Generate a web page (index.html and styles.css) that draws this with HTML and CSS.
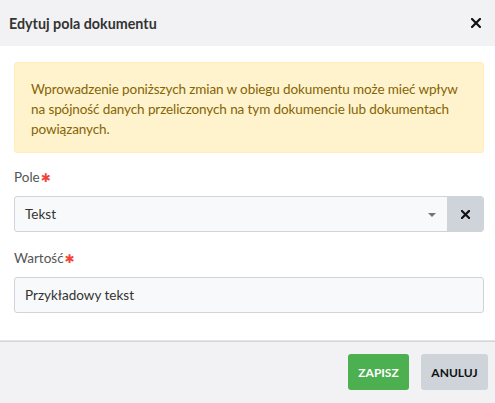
FILE: index.html
```html
<!DOCTYPE html>
<html lang="pl">
<head>
<meta charset="utf-8">
<title>Edytuj pola dokumentu</title>
<link rel="stylesheet" href="styles.css">
</head>
<body>
<div class="modal">
  <div class="modal-header">
    <h1 class="modal-title">Edytuj pola dokumentu</h1>
    <button class="close" type="button" aria-label="Zamknij">
      <svg width="10" height="10" viewBox="0 0 10 10"><path d="M1 1L9 9M9 1L1 9" stroke="#111" stroke-width="2.2" stroke-linecap="square"/></svg>
    </button>
  </div>
  <div class="modal-body">
    <div class="alert">Wprowadzenie poniższych zmian w obiegu dokumentu może mieć wpływ na spójność danych przeliczonych na tym dokumencie lub dokumentach powiązanych.</div>
    <div class="field">
      <label class="label">Pole<span class="req">✱</span></label>
      <div class="select">
        <div class="select-value">Tekst</div>
        <span class="caret"></span>
        <button class="select-clear" type="button" aria-label="Wyczyść">
          <svg width="9" height="9" viewBox="0 0 10 10"><path d="M1 1L9 9M9 1L1 9" stroke="#111" stroke-width="2.4" stroke-linecap="square"/></svg>
        </button>
      </div>
    </div>
    <div class="field">
      <label class="label">Wartość<span class="req">✱</span></label>
      <div class="input">Przykładowy tekst</div>
    </div>
  </div>
  <div class="modal-footer">
    <button class="btn btn-save" type="button">ZAPISZ</button>
    <button class="btn btn-cancel" type="button">ANULUJ</button>
  </div>
</div>
</body>
</html>
```
FILE: styles.css
```css
* { box-sizing: border-box; }
html, body { margin: 0; padding: 0; }
body {
  font-family: "Lato", "Open Sans", "Liberation Sans", sans-serif;
  font-size: 13.5px;
  color: #333;
  background: #fff;
  width: 495px;
  height: 403px;
  overflow: hidden;
}
.modal { display: flex; flex-direction: column; height: 403px; }
.modal-header {
  height: 46px;
  background: #f2f2f4;
  display: flex;
  align-items: center;
  justify-content: space-between;
  padding: 0 13px 0 9px;
}
.modal-title { margin: 0; font-size: 14.3px; font-weight: 700; color: #333; }
.close { border: 0; background: none; padding: 0; width: 12px; height: 12px; display: flex; align-items: center; justify-content: center; cursor: pointer; }
.modal-body { flex: 1; padding: 16px 11px 0 14px; }
.alert {
  background: #fff3cd;
  border: 1px solid #ffeeba;
  border-radius: 3px;
  color: #856404;
  padding: 16px;
  line-height: 20px;
  letter-spacing: -0.1px;
  height: 91px;
}
.field { margin-top: 14px; }
.field + .field { margin-top: 16px; }
.label { display: block; color: #555; line-height: 20px; margin-bottom: 8px; }
.req { color: #f44336; font-size: 12px; margin-left: 1px; font-family: "DejaVu Sans", sans-serif; }
.select, .input {
  height: 36px;
  background: #f8f9fa;
  border: 1px solid #ced4da;
  border-radius: 3px;
  display: flex;
  align-items: center;
}
.select-value, .input { padding-left: 10px; color: #333; }
.select-value { flex: 1; }
.caret {
  width: 0; height: 0;
  border-left: 4px solid transparent;
  border-right: 4px solid transparent;
  border-top: 4px solid #6f757b;
  margin-right: 11px;
  margin-top: 1px;
}
.select-clear {
  width: 36px; height: 34px;
  border: 0;
  background: #ced4da;
  border-radius: 0 2px 2px 0;
  display: flex; align-items: center; justify-content: center;
  padding: 0;
}
.modal-footer {
  height: 63px;
  background: #f2f2f4;
  border-top: 1px solid #e4e4e6;
  box-shadow: inset 0 1px 0 #d6d6d8;
  display: flex;
  align-items: center;
  justify-content: flex-end;
  gap: 12px;
  padding: 0 7px 0 0;
}
.btn {
  height: 36px;
  border: 0;
  border-radius: 3px;
  font-family: inherit;
  font-size: 12px;
  font-weight: 700;
  padding: 0 6px;
}
.btn-save { background: #4caf50; color: #fff; width: 61px; }
.btn-cancel { background: #ced4da; color: #111; width: 67px; }
```
